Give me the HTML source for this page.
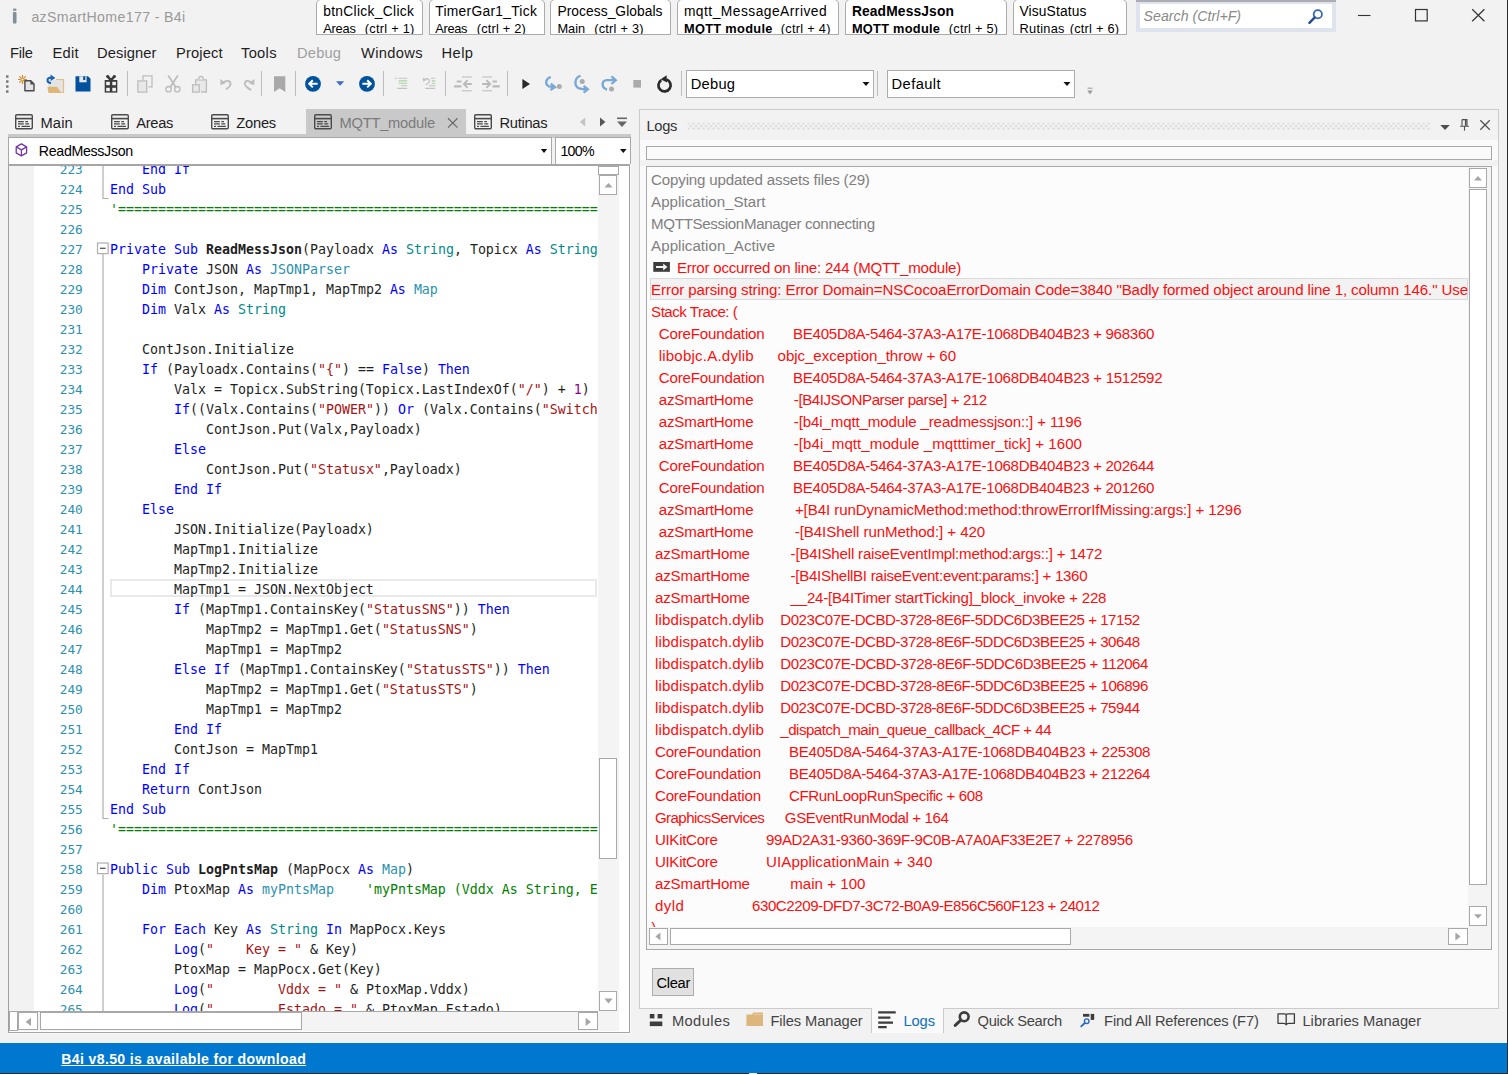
<!DOCTYPE html>
<html lang="en"><head><meta charset="utf-8"><title>azSmartHome177 - B4i</title>
<style>
html,body{margin:0;padding:0}
body{width:1508px;height:1074px;background:#f2f2f2;position:relative;overflow:hidden;font-family:"Liberation Sans", sans-serif;}
.b{position:absolute}
.t{position:absolute;white-space:pre;line-height:20px;}
#ed{position:absolute;left:34px;top:166px;width:564px;height:845px;overflow:hidden;background:#fff;font-family:"DejaVu Sans Mono", "Liberation Mono", monospace;font-size:13.29px;line-height:20px;color:#1e1e1e}
#ed .ln{position:absolute;left:0;width:48.8px;text-align:right;color:#2b91af;font-size:12.8px;white-space:pre}
#ed .cl{position:absolute;left:76px;white-space:pre}
#ed .cur{position:absolute;left:76px;width:487px;height:18px;box-sizing:border-box;border:2px solid #e9e9e9}
.k{color:#0000ff}.y{color:#2b91af}.z{color:#008b8b}.s{color:#a31515}.c{color:#008000}.n{color:#8b008b}
svg{position:absolute;overflow:visible}
</style></head>
<body>
<div class="b" style="left:316px;top:-1px;width:106.5px;height:35.5px;background:#fff;border:1px solid #ababab;box-sizing:border-box;border-radius:5px 5px 0 0;"></div>
<div class="b" style="left:428.5px;top:-1px;width:116.0px;height:35.5px;background:#fff;border:1px solid #ababab;box-sizing:border-box;border-radius:5px 5px 0 0;"></div>
<div class="b" style="left:550px;top:-1px;width:120.5px;height:35.5px;background:#fff;border:1px solid #ababab;box-sizing:border-box;border-radius:5px 5px 0 0;"></div>
<div class="b" style="left:676.5px;top:-1px;width:162.0px;height:35.5px;background:#fff;border:1px solid #ababab;box-sizing:border-box;border-radius:5px 5px 0 0;"></div>
<div class="b" style="left:844.5px;top:-1px;width:162.0px;height:35.5px;background:#fff;border:1px solid #ababab;box-sizing:border-box;border-radius:5px 5px 0 0;"></div>
<div class="b" style="left:1012.5px;top:-1px;width:114.5px;height:35.5px;background:#fff;border:1px solid #ababab;box-sizing:border-box;border-radius:5px 5px 0 0;"></div>
<div class="b" style="left:1136px;top:0px;width:200px;height:32px;background:#dfe3ee;"></div>
<div class="b" style="left:1136px;top:0px;width:200px;height:1.8px;background:#acacb2;"></div>
<div class="b" style="left:1139.8px;top:3.8px;width:192.5px;height:24.2px;background:#fff;"></div>
<div class="b" style="left:686px;top:70px;width:188px;height:27.5px;background:#fff;border:1px solid #acacac;box-sizing:border-box;"></div>
<div class="b" style="left:887px;top:70px;width:188px;height:27.5px;background:#fff;border:1px solid #acacac;box-sizing:border-box;"></div>
<div class="b" style="left:127px;top:71px;width:1px;height:25px;background:#bdbdbd;"></div>
<div class="b" style="left:261px;top:71px;width:1px;height:25px;background:#bdbdbd;"></div>
<div class="b" style="left:295px;top:71px;width:1px;height:25px;background:#bdbdbd;"></div>
<div class="b" style="left:383px;top:71px;width:1px;height:25px;background:#bdbdbd;"></div>
<div class="b" style="left:445px;top:71px;width:1px;height:25px;background:#bdbdbd;"></div>
<div class="b" style="left:507px;top:71px;width:1px;height:25px;background:#bdbdbd;"></div>
<div class="b" style="left:681px;top:71px;width:1px;height:25px;background:#bdbdbd;"></div>
<div class="b" style="left:877px;top:71px;width:1px;height:25px;background:#bdbdbd;"></div>
<div class="b" style="left:306px;top:109px;width:160px;height:25px;background:#c9c9c9;"></div>
<div class="b" style="left:8px;top:134px;width:623px;height:4px;background:#c9c9c9;"></div>
<div class="b" style="left:8px;top:137px;width:544px;height:28px;background:#fff;border:1px solid #a8a8a8;box-sizing:border-box;"></div>
<div class="b" style="left:555px;top:137px;width:76px;height:28px;background:#fff;border:1px solid #a8a8a8;box-sizing:border-box;"></div>
<div class="b" style="left:8px;top:164px;width:622px;height:869px;background:#fff;border:1px solid #a0a0a0;box-sizing:border-box;"></div>
<div class="b" style="left:8px;top:164px;width:622px;height:2px;background:#a6a6a6;"></div>
<div class="b" style="left:8px;top:1032px;width:622px;height:1px;background:#a6a6a6;"></div>
<div class="b" style="left:9px;top:166px;width:25px;height:845px;background:#f2f2f2;"></div>
<div class="b" style="left:598px;top:166px;width:21px;height:865px;background:#f4f4f4;"></div>
<div class="b" style="left:598px;top:166px;width:21px;height:9px;background:#fff;border:1px solid #a8a8a8;box-sizing:border-box;"></div>
<div class="b" style="left:599px;top:175px;width:18px;height:20px;background:#fff;border:1px solid #a8a8a8;box-sizing:border-box;"></div>
<div class="b" style="left:599px;top:758px;width:18px;height:101px;background:#fff;border:1px solid #a8a8a8;box-sizing:border-box;"></div>
<div class="b" style="left:599px;top:991.4px;width:18px;height:19.600000000000023px;background:#fff;border:1px solid #a8a8a8;box-sizing:border-box;"></div>
<div class="b" style="left:9px;top:1011px;width:589px;height:20px;background:#f4f4f4;"></div>
<div class="b" style="left:9px;top:1011px;width:589px;height:1px;background:#a8a8a8;"></div>
<div class="b" style="left:9px;top:1011px;width:9px;height:20px;background:#fff;border:1px solid #a8a8a8;box-sizing:border-box;"></div>
<div class="b" style="left:18px;top:1012px;width:20px;height:18px;background:#fff;border:1px solid #a8a8a8;box-sizing:border-box;"></div>
<div class="b" style="left:39.5px;top:1012px;width:262.5px;height:18px;background:#fff;border:1px solid #a8a8a8;box-sizing:border-box;"></div>
<div class="b" style="left:578px;top:1012px;width:20px;height:18px;background:#fff;border:1px solid #a8a8a8;box-sizing:border-box;"></div>
<div class="b" style="left:630px;top:164px;width:1.2999999999999545px;height:870px;background:#fafafa;"></div>
<div class="b" style="left:8px;top:1033px;width:623.3px;height:1px;background:#fafafa;"></div>
<div class="b" style="left:639px;top:109px;width:860px;height:900px;background:#fafafa;border:1px solid #cbcbcb;box-sizing:border-box;"></div>
<div class="b" style="left:640px;top:110px;width:858px;height:30px;background:#f2f2f2;"></div>
<div class="b" style="left:640px;top:160px;width:858px;height:6px;background:#f2f2f2;"></div>
<div class="b" style="left:646px;top:146px;width:846px;height:14px;background:#fafafa;border:1px solid #a8a8a8;box-sizing:border-box;"></div>
<div class="b" style="left:646px;top:166px;width:846px;height:784px;background:#fcfcfc;border:1px solid #a8a8a8;box-sizing:border-box;"></div>
<div class="b" style="left:650px;top:278px;width:818px;height:22px;background:#f2f2f2;border:1px solid #dadada;box-sizing:border-box;"></div>
<div class="b" style="left:1468px;top:167px;width:23px;height:760px;background:#f4f4f4;"></div>
<div class="b" style="left:1469px;top:168px;width:18px;height:20px;background:#fff;border:1px solid #a8a8a8;box-sizing:border-box;"></div>
<div class="b" style="left:1469px;top:189px;width:18px;height:696px;background:#fff;border:1px solid #a8a8a8;box-sizing:border-box;"></div>
<div class="b" style="left:1469px;top:906px;width:18px;height:20px;background:#fff;border:1px solid #a8a8a8;box-sizing:border-box;"></div>
<div class="b" style="left:652px;top:968px;width:42px;height:28px;background:#e1e1e1;border:1px solid #adadad;box-sizing:border-box;"></div>
<div class="b" style="left:870.5px;top:1008px;width:73.0px;height:24.5px;background:#fafafa;border:1px solid #cbcbcb;box-sizing:border-box;border-top:none;border-bottom:none;"></div>
<div class="b" style="left:0px;top:1043px;width:1508px;height:31px;background:#0078d0;"></div>
<div class="b" style="left:0px;top:1072.7px;width:1508px;height:1.2999999999999545px;background:#33261f;"></div>
<div class="b" style="left:749px;top:1073px;width:8px;height:1px;background:#fbe8dc;"></div>
<div class="b" style="left:1506.5px;top:0px;width:1.5px;height:1074px;background:#2b2b2b;"></div>
<div id="ed">
<div class="cur" style="top:413px"></div>
<div class="ln" style="top:-6px">223</div>
<div class="cl" style="top:-6px">    <span class="k">End</span> <span class="k">If</span></div>
<div class="ln" style="top:14px">224</div>
<div class="cl" style="top:14px"><span class="k">End</span> <span class="k">Sub</span></div>
<div class="ln" style="top:34px">225</div>
<div class="cl" style="top:34px"><span class="c">'======================================================================</span></div>
<div class="ln" style="top:54px">226</div>
<div class="ln" style="top:74px">227</div>
<div class="cl" style="top:74px"><span class="k">Private</span> <span class="k">Sub</span> <b>ReadMessJson</b>(Payloadx <span class="k">As</span> <span class="z">String</span>, Topicx <span class="k">As</span> <span class="z">String</span>) <span class="k">As</span> <span class="y">Map</span></div>
<div class="ln" style="top:94px">228</div>
<div class="cl" style="top:94px">    <span class="k">Private</span> JSON <span class="k">As</span> <span class="y">JSONParser</span></div>
<div class="ln" style="top:114px">229</div>
<div class="cl" style="top:114px">    <span class="k">Dim</span> ContJson, MapTmp1, MapTmp2 <span class="k">As</span> <span class="y">Map</span></div>
<div class="ln" style="top:134px">230</div>
<div class="cl" style="top:134px">    <span class="k">Dim</span> Valx <span class="k">As</span> <span class="z">String</span></div>
<div class="ln" style="top:154px">231</div>
<div class="ln" style="top:174px">232</div>
<div class="cl" style="top:174px">    ContJson.Initialize</div>
<div class="ln" style="top:194px">233</div>
<div class="cl" style="top:194px">    <span class="k">If</span> (Payloadx.Contains(<span class="s">"{"</span>) == <span class="k">False</span>) <span class="k">Then</span></div>
<div class="ln" style="top:214px">234</div>
<div class="cl" style="top:214px">        Valx = Topicx.SubString(Topicx.LastIndexOf(<span class="s">"/"</span>) + <span class="n">1</span>)</div>
<div class="ln" style="top:234px">235</div>
<div class="cl" style="top:234px">        <span class="k">If</span>((Valx.Contains(<span class="s">"POWER"</span>)) <span class="k">Or</span> (Valx.Contains(<span class="s">"Switch1"</span>))) <span class="k">Then</span></div>
<div class="ln" style="top:254px">236</div>
<div class="cl" style="top:254px">            ContJson.Put(Valx,Payloadx)</div>
<div class="ln" style="top:274px">237</div>
<div class="cl" style="top:274px">        <span class="k">Else</span></div>
<div class="ln" style="top:294px">238</div>
<div class="cl" style="top:294px">            ContJson.Put(<span class="s">"Statusx"</span>,Payloadx)</div>
<div class="ln" style="top:314px">239</div>
<div class="cl" style="top:314px">        <span class="k">End</span> <span class="k">If</span></div>
<div class="ln" style="top:334px">240</div>
<div class="cl" style="top:334px">    <span class="k">Else</span></div>
<div class="ln" style="top:354px">241</div>
<div class="cl" style="top:354px">        JSON.Initialize(Payloadx)</div>
<div class="ln" style="top:374px">242</div>
<div class="cl" style="top:374px">        MapTmp1.Initialize</div>
<div class="ln" style="top:394px">243</div>
<div class="cl" style="top:394px">        MapTmp2.Initialize</div>
<div class="ln" style="top:414px">244</div>
<div class="cl" style="top:414px">        MapTmp1 = JSON.NextObject</div>
<div class="ln" style="top:434px">245</div>
<div class="cl" style="top:434px">        <span class="k">If</span> (MapTmp1.ContainsKey(<span class="s">"StatusSNS"</span>)) <span class="k">Then</span></div>
<div class="ln" style="top:454px">246</div>
<div class="cl" style="top:454px">            MapTmp2 = MapTmp1.Get(<span class="s">"StatusSNS"</span>)</div>
<div class="ln" style="top:474px">247</div>
<div class="cl" style="top:474px">            MapTmp1 = MapTmp2</div>
<div class="ln" style="top:494px">248</div>
<div class="cl" style="top:494px">        <span class="k">Else</span> <span class="k">If</span> (MapTmp1.ContainsKey(<span class="s">"StatusSTS"</span>)) <span class="k">Then</span></div>
<div class="ln" style="top:514px">249</div>
<div class="cl" style="top:514px">            MapTmp2 = MapTmp1.Get(<span class="s">"StatusSTS"</span>)</div>
<div class="ln" style="top:534px">250</div>
<div class="cl" style="top:534px">            MapTmp1 = MapTmp2</div>
<div class="ln" style="top:554px">251</div>
<div class="cl" style="top:554px">        <span class="k">End</span> <span class="k">If</span></div>
<div class="ln" style="top:574px">252</div>
<div class="cl" style="top:574px">        ContJson = MapTmp1</div>
<div class="ln" style="top:594px">253</div>
<div class="cl" style="top:594px">    <span class="k">End</span> <span class="k">If</span></div>
<div class="ln" style="top:614px">254</div>
<div class="cl" style="top:614px">    <span class="k">Return</span> ContJson</div>
<div class="ln" style="top:634px">255</div>
<div class="cl" style="top:634px"><span class="k">End</span> <span class="k">Sub</span></div>
<div class="ln" style="top:654px">256</div>
<div class="cl" style="top:654px"><span class="c">'======================================================================</span></div>
<div class="ln" style="top:674px">257</div>
<div class="ln" style="top:694px">258</div>
<div class="cl" style="top:694px"><span class="k">Public</span> <span class="k">Sub</span> <b>LogPntsMap</b> (MapPocx <span class="k">As</span> <span class="y">Map</span>)</div>
<div class="ln" style="top:714px">259</div>
<div class="cl" style="top:714px">    <span class="k">Dim</span> PtoxMap <span class="k">As</span> <span class="y">myPntsMap</span>    <span class="c">'myPntsMap (Vddx As String, Estado As String)</span></div>
<div class="ln" style="top:734px">260</div>
<div class="ln" style="top:754px">261</div>
<div class="cl" style="top:754px">    <span class="k">For</span> <span class="k">Each</span> Key <span class="k">As</span> <span class="z">String</span> <span class="k">In</span> MapPocx.Keys</div>
<div class="ln" style="top:774px">262</div>
<div class="cl" style="top:774px">        <span class="k">Log</span>(<span class="s">"    Key = "</span> &amp; Key)</div>
<div class="ln" style="top:794px">263</div>
<div class="cl" style="top:794px">        PtoxMap = MapPocx.Get(Key)</div>
<div class="ln" style="top:814px">264</div>
<div class="cl" style="top:814px">        <span class="k">Log</span>(<span class="s">"        Vddx = "</span> &amp; PtoxMap.Vddx)</div>
<div class="ln" style="top:834px">265</div>
<div class="cl" style="top:834px">        <span class="k">Log</span>(<span class="s">"        Estado = "</span> &amp; PtoxMap.Estado)</div>
</div>
<span class="t" style="left:31.4px;top:7px;font-size:14.1px;color:#999999;letter-spacing:0.385px;">azSmartHome177 - B4i</span>
<span class="t" style="left:10.0px;top:43px;font-size:14.7px;color:#1e1e1e;letter-spacing:-0.224px;">File</span>
<span class="t" style="left:52.4px;top:43px;font-size:14.7px;color:#1e1e1e;letter-spacing:0.263px;">Edit</span>
<span class="t" style="left:97.0px;top:43px;font-size:14.7px;color:#1e1e1e;letter-spacing:0.103px;">Designer</span>
<span class="t" style="left:176.0px;top:43px;font-size:14.7px;color:#1e1e1e;letter-spacing:0.130px;">Project</span>
<span class="t" style="left:241.0px;top:43px;font-size:14.7px;color:#1e1e1e;letter-spacing:0.301px;">Tools</span>
<span class="t" style="left:361.0px;top:43px;font-size:14.7px;color:#1e1e1e;letter-spacing:0.318px;">Windows</span>
<span class="t" style="left:441.6px;top:43px;font-size:14.7px;color:#1e1e1e;letter-spacing:0.394px;">Help</span>
<span class="t" style="left:297.0px;top:43px;font-size:14.7px;color:#a0a0a0;letter-spacing:0.180px;">Debug</span>
<span class="t" style="left:323.2px;top:2px;font-size:13.8px;color:#000;letter-spacing:0.312px;">btnClick_Click</span>
<span class="t" style="left:323.2px;top:19px;font-size:12.8px;color:#000;letter-spacing:-0.184px;">Areas</span>
<span class="t" style="left:364.7px;top:19px;font-size:12.8px;color:#000;letter-spacing:0.267px;">(ctrl + 1)</span>
<span class="t" style="left:435.3px;top:2px;font-size:13.8px;color:#000;letter-spacing:0.279px;">TimerGar1_Tick</span>
<span class="t" style="left:435.3px;top:19px;font-size:12.8px;color:#000;letter-spacing:-0.309px;">Areas</span>
<span class="t" style="left:476.8px;top:19px;font-size:12.8px;color:#000;letter-spacing:0.200px;">(ctrl + 2)</span>
<span class="t" style="left:557.4px;top:2px;font-size:13.8px;color:#000;letter-spacing:0.057px;">Process_Globals</span>
<span class="t" style="left:557.4px;top:19px;font-size:12.8px;color:#000;letter-spacing:-0.017px;">Main</span>
<span class="t" style="left:594.2px;top:19px;font-size:12.8px;color:#000;letter-spacing:0.234px;">(ctrl + 3)</span>
<span class="t" style="left:683.9px;top:2px;font-size:13.8px;color:#000;letter-spacing:0.478px;">mqtt_MessageArrived</span>
<span class="t" style="left:683.9px;top:19px;font-size:12.8px;color:#000;font-weight:bold;letter-spacing:0.329px;">MQTT module</span>
<span class="t" style="left:780.8px;top:19px;font-size:12.8px;color:#000;letter-spacing:0.267px;">(ctrl + 4)</span>
<span class="t" style="left:851.9px;top:2px;font-size:13.8px;color:#000;font-weight:bold;letter-spacing:0.141px;">ReadMessJson</span>
<span class="t" style="left:851.9px;top:19px;font-size:12.8px;color:#000;font-weight:bold;letter-spacing:0.279px;">MQTT module</span>
<span class="t" style="left:948.8px;top:19px;font-size:12.8px;color:#000;letter-spacing:0.211px;">(ctrl + 5)</span>
<span class="t" style="left:1019.5px;top:2px;font-size:13.8px;color:#000;letter-spacing:0.131px;">VisuStatus</span>
<span class="t" style="left:1019.5px;top:19px;font-size:12.8px;color:#000;letter-spacing:0.268px;">Rutinas</span>
<span class="t" style="left:1069.7px;top:19px;font-size:12.8px;color:#000;letter-spacing:0.223px;">(ctrl + 6)</span>
<span class="t" style="left:1143.6px;top:6px;font-size:14.2px;color:#8a8a8a;font-style:italic;letter-spacing:0.010px;">Search (Ctrl+F)</span>
<span class="t" style="left:690.7px;top:74px;font-size:14.7px;color:#000;letter-spacing:0.255px;">Debug</span>
<span class="t" style="left:891.6px;top:74px;font-size:14.7px;color:#000;letter-spacing:0.392px;">Default</span>
<span class="t" style="left:40.5px;top:113px;font-size:14.7px;color:#1e1e1e;letter-spacing:0.119px;">Main</span>
<span class="t" style="left:136.3px;top:113px;font-size:14.7px;color:#1e1e1e;letter-spacing:-0.319px;">Areas</span>
<span class="t" style="left:236.3px;top:113px;font-size:14.7px;color:#1e1e1e;letter-spacing:-0.232px;">Zones</span>
<span class="t" style="left:339.5px;top:113px;font-size:14.7px;color:#7a7a7a;letter-spacing:-0.235px;">MQTT_module</span>
<span class="t" style="left:499.5px;top:113px;font-size:14.7px;color:#1e1e1e;letter-spacing:-0.302px;">Rutinas</span>
<span class="t" style="left:38.8px;top:141px;font-size:14.2px;color:#000;letter-spacing:-0.313px;">ReadMessJson</span>
<span class="t" style="left:560.4px;top:141px;font-size:14.2px;color:#000;letter-spacing:-0.666px;">100%</span>
<span class="t" style="left:646.5px;top:116px;font-size:14.7px;color:#333;letter-spacing:-0.320px;">Logs</span>
<span class="t" style="left:656.5px;top:973px;font-size:14.7px;color:#000;letter-spacing:-0.327px;">Clear</span>
<span class="t" style="left:671.9px;top:1011px;font-size:14.7px;color:#444;letter-spacing:0.397px;">Modules</span>
<span class="t" style="left:770.4px;top:1011px;font-size:14.7px;color:#444;letter-spacing:-0.064px;">Files Manager</span>
<span class="t" style="left:903.4px;top:1011px;font-size:14.7px;color:#0e70c0;letter-spacing:-0.053px;">Logs</span>
<span class="t" style="left:977.6px;top:1011px;font-size:14.7px;color:#444;letter-spacing:-0.325px;">Quick Search</span>
<span class="t" style="left:1104.1px;top:1011px;font-size:14.7px;color:#444;letter-spacing:-0.159px;">Find All References (F7)</span>
<span class="t" style="left:1302.4px;top:1011px;font-size:14.7px;color:#444;letter-spacing:0.027px;">Libraries Manager</span>
<span class="t" style="left:61.3px;top:1049px;font-size:14.1px;color:#fff;font-weight:bold;text-decoration:underline;letter-spacing:0.349px;">B4i v8.50 is available for download</span>
<span class="t" style="left:651.1px;top:170px;font-size:15.1px;color:#808080;letter-spacing:-0.163px;">Copying updated assets files (29)</span>
<span class="t" style="left:651.1px;top:192px;font-size:15.1px;color:#808080;letter-spacing:0.011px;">Application_Start</span>
<span class="t" style="left:651.1px;top:214px;font-size:15.1px;color:#808080;letter-spacing:-0.330px;">MQTTSessionManager connecting</span>
<span class="t" style="left:651.1px;top:236px;font-size:15.1px;color:#808080;letter-spacing:0.039px;">Application_Active</span>
<span class="t" style="left:676.9px;top:258px;font-size:15.1px;color:#fa0f0f;letter-spacing:-0.230px;">Error occurred on line: 244 (MQTT_module)</span>
<span class="t" style="left:651.1px;top:280px;font-size:15.1px;color:#fa0f0f;letter-spacing:-0.109px;">Error parsing string: Error Domain=NSCocoaErrorDomain Code=3840 "Badly formed object around line 1, column 146." Use</span>
<span class="t" style="left:651.1px;top:302px;font-size:15.1px;color:#fa0f0f;letter-spacing:-0.493px;">Stack Trace: (</span>
<span class="t" style="left:658.7px;top:324px;font-size:15.1px;color:#fa0f0f;letter-spacing:-0.173px;">CoreFoundation</span>
<span class="t" style="left:793.1px;top:324px;font-size:15.1px;color:#fa0f0f;letter-spacing:-0.305px;">BE405D8A-5464-37A3-A17E-1068DB404B23 + 968360</span>
<span class="t" style="left:658.7px;top:346px;font-size:15.1px;color:#fa0f0f;letter-spacing:0.193px;">libobjc.A.dylib</span>
<span class="t" style="left:777.6px;top:346px;font-size:15.1px;color:#fa0f0f;letter-spacing:-0.063px;">objc_exception_throw + 60</span>
<span class="t" style="left:658.7px;top:368px;font-size:15.1px;color:#fa0f0f;letter-spacing:-0.173px;">CoreFoundation</span>
<span class="t" style="left:793.1px;top:368px;font-size:15.1px;color:#fa0f0f;letter-spacing:-0.302px;">BE405D8A-5464-37A3-A17E-1068DB404B23 + 1512592</span>
<span class="t" style="left:658.7px;top:390px;font-size:15.1px;color:#fa0f0f;letter-spacing:-0.147px;">azSmartHome</span>
<span class="t" style="left:793.8px;top:390px;font-size:15.1px;color:#fa0f0f;letter-spacing:-0.434px;">-[B4IJSONParser parse] + 212</span>
<span class="t" style="left:658.7px;top:412px;font-size:15.1px;color:#fa0f0f;letter-spacing:-0.147px;">azSmartHome</span>
<span class="t" style="left:793.8px;top:412px;font-size:15.1px;color:#fa0f0f;letter-spacing:-0.140px;">-[b4i_mqtt_module _readmessjson::] + 1196</span>
<span class="t" style="left:658.7px;top:434px;font-size:15.1px;color:#fa0f0f;letter-spacing:-0.147px;">azSmartHome</span>
<span class="t" style="left:793.8px;top:434px;font-size:15.1px;color:#fa0f0f;letter-spacing:0.042px;">-[b4i_mqtt_module _mqtttimer_tick] + 1600</span>
<span class="t" style="left:658.7px;top:456px;font-size:15.1px;color:#fa0f0f;letter-spacing:-0.173px;">CoreFoundation</span>
<span class="t" style="left:793.1px;top:456px;font-size:15.1px;color:#fa0f0f;letter-spacing:-0.305px;">BE405D8A-5464-37A3-A17E-1068DB404B23 + 202644</span>
<span class="t" style="left:658.7px;top:478px;font-size:15.1px;color:#fa0f0f;letter-spacing:-0.173px;">CoreFoundation</span>
<span class="t" style="left:793.1px;top:478px;font-size:15.1px;color:#fa0f0f;letter-spacing:-0.305px;">BE405D8A-5464-37A3-A17E-1068DB404B23 + 201260</span>
<span class="t" style="left:658.7px;top:500px;font-size:15.1px;color:#fa0f0f;letter-spacing:-0.147px;">azSmartHome</span>
<span class="t" style="left:794.9px;top:500px;font-size:15.1px;color:#fa0f0f;letter-spacing:-0.089px;">+[B4I runDynamicMethod:method:throwErrorIfMissing:args:] + 1296</span>
<span class="t" style="left:658.7px;top:522px;font-size:15.1px;color:#fa0f0f;letter-spacing:-0.147px;">azSmartHome</span>
<span class="t" style="left:794.7px;top:522px;font-size:15.1px;color:#fa0f0f;letter-spacing:-0.077px;">-[B4IShell runMethod:] + 420</span>
<span class="t" style="left:654.9px;top:544px;font-size:15.1px;color:#fa0f0f;letter-spacing:-0.137px;">azSmartHome</span>
<span class="t" style="left:790.6px;top:544px;font-size:15.1px;color:#fa0f0f;letter-spacing:-0.198px;">-[B4IShell raiseEventImpl:method:args::] + 1472</span>
<span class="t" style="left:654.9px;top:566px;font-size:15.1px;color:#fa0f0f;letter-spacing:-0.137px;">azSmartHome</span>
<span class="t" style="left:790.6px;top:566px;font-size:15.1px;color:#fa0f0f;letter-spacing:-0.296px;">-[B4IShellBI raiseEvent:event:params:] + 1360</span>
<span class="t" style="left:654.9px;top:588px;font-size:15.1px;color:#fa0f0f;letter-spacing:-0.137px;">azSmartHome</span>
<span class="t" style="left:790.6px;top:588px;font-size:15.1px;color:#fa0f0f;letter-spacing:-0.230px;">__24-[B4ITimer startTicking]_block_invoke + 228</span>
<span class="t" style="left:654.9px;top:610px;font-size:15.1px;color:#fa0f0f;letter-spacing:0.159px;">libdispatch.dylib</span>
<span class="t" style="left:780.3px;top:610px;font-size:15.1px;color:#fa0f0f;letter-spacing:-0.498px;">D023C07E-DCBD-3728-8E6F-5DDC6D3BEE25 + 17152</span>
<span class="t" style="left:654.9px;top:632px;font-size:15.1px;color:#fa0f0f;letter-spacing:0.159px;">libdispatch.dylib</span>
<span class="t" style="left:780.3px;top:632px;font-size:15.1px;color:#fa0f0f;letter-spacing:-0.498px;">D023C07E-DCBD-3728-8E6F-5DDC6D3BEE25 + 30648</span>
<span class="t" style="left:654.9px;top:654px;font-size:15.1px;color:#fa0f0f;letter-spacing:0.159px;">libdispatch.dylib</span>
<span class="t" style="left:780.3px;top:654px;font-size:15.1px;color:#fa0f0f;letter-spacing:-0.466px;">D023C07E-DCBD-3728-8E6F-5DDC6D3BEE25 + 112064</span>
<span class="t" style="left:654.9px;top:676px;font-size:15.1px;color:#fa0f0f;letter-spacing:0.159px;">libdispatch.dylib</span>
<span class="t" style="left:780.3px;top:676px;font-size:15.1px;color:#fa0f0f;letter-spacing:-0.491px;">D023C07E-DCBD-3728-8E6F-5DDC6D3BEE25 + 106896</span>
<span class="t" style="left:654.9px;top:698px;font-size:15.1px;color:#fa0f0f;letter-spacing:0.159px;">libdispatch.dylib</span>
<span class="t" style="left:780.3px;top:698px;font-size:15.1px;color:#fa0f0f;letter-spacing:-0.498px;">D023C07E-DCBD-3728-8E6F-5DDC6D3BEE25 + 75944</span>
<span class="t" style="left:654.9px;top:720px;font-size:15.1px;color:#fa0f0f;letter-spacing:0.159px;">libdispatch.dylib</span>
<span class="t" style="left:780.3px;top:720px;font-size:15.1px;color:#fa0f0f;letter-spacing:-0.503px;">_dispatch_main_queue_callback_4CF + 44</span>
<span class="t" style="left:654.9px;top:742px;font-size:15.1px;color:#fa0f0f;letter-spacing:-0.158px;">CoreFoundation</span>
<span class="t" style="left:789.0px;top:742px;font-size:15.1px;color:#fa0f0f;letter-spacing:-0.300px;">BE405D8A-5464-37A3-A17E-1068DB404B23 + 225308</span>
<span class="t" style="left:654.9px;top:764px;font-size:15.1px;color:#fa0f0f;letter-spacing:-0.158px;">CoreFoundation</span>
<span class="t" style="left:789.0px;top:764px;font-size:15.1px;color:#fa0f0f;letter-spacing:-0.300px;">BE405D8A-5464-37A3-A17E-1068DB404B23 + 212264</span>
<span class="t" style="left:654.9px;top:786px;font-size:15.1px;color:#fa0f0f;letter-spacing:-0.158px;">CoreFoundation</span>
<span class="t" style="left:789.0px;top:786px;font-size:15.1px;color:#fa0f0f;letter-spacing:-0.409px;">CFRunLoopRunSpecific + 608</span>
<span class="t" style="left:654.9px;top:808px;font-size:15.1px;color:#fa0f0f;letter-spacing:-0.559px;">GraphicsServices</span>
<span class="t" style="left:784.8px;top:808px;font-size:15.1px;color:#fa0f0f;letter-spacing:-0.370px;">GSEventRunModal + 164</span>
<span class="t" style="left:654.9px;top:830px;font-size:15.1px;color:#fa0f0f;letter-spacing:-0.305px;">UIKitCore</span>
<span class="t" style="left:765.9px;top:830px;font-size:15.1px;color:#fa0f0f;letter-spacing:-0.388px;">99AD2A31-9360-369F-9C0B-A7A0AF33E2E7 + 2278956</span>
<span class="t" style="left:654.9px;top:852px;font-size:15.1px;color:#fa0f0f;letter-spacing:-0.305px;">UIKitCore</span>
<span class="t" style="left:765.9px;top:852px;font-size:15.1px;color:#fa0f0f;letter-spacing:0.116px;">UIApplicationMain + 340</span>
<span class="t" style="left:654.9px;top:874px;font-size:15.1px;color:#fa0f0f;letter-spacing:-0.137px;">azSmartHome</span>
<span class="t" style="left:790.2px;top:874px;font-size:15.1px;color:#fa0f0f;letter-spacing:0.021px;">main + 100</span>
<span class="t" style="left:654.9px;top:896px;font-size:15.1px;color:#fa0f0f;letter-spacing:0.399px;">dyld</span>
<span class="t" style="left:752.0px;top:896px;font-size:15.1px;color:#fa0f0f;letter-spacing:-0.447px;">630C2209-DFD7-3C72-B0A9-E856C560F123 + 24012</span>
<span class="t" style="left:651.3px;top:918px;font-size:15.1px;color:#fa0f0f;letter-spacing:-1.131px;">)</span>
<div class="b" style="left:647px;top:927px;width:844px;height:22px;background:#f4f4f4;"></div>
<div class="b" style="left:648.5px;top:927.5px;width:19.0px;height:17.5px;background:#fff;border:1px solid #a8a8a8;box-sizing:border-box;"></div>
<div class="b" style="left:669.5px;top:927.5px;width:401.0px;height:17.5px;background:#fff;border:1px solid #a8a8a8;box-sizing:border-box;"></div>
<div class="b" style="left:1448px;top:927.5px;width:20px;height:17.5px;background:#fff;border:1px solid #a8a8a8;box-sizing:border-box;"></div>
<div class="b" style="left:300px;top:34.5px;width:835px;height:5.5px;background:#f2f2f2;"></div>
<div class="b" style="left:316px;top:33.5px;width:106.5px;height:1.0px;background:#ababab;"></div>
<div class="b" style="left:428.5px;top:33.5px;width:116.0px;height:1.0px;background:#ababab;"></div>
<div class="b" style="left:550px;top:33.5px;width:120.5px;height:1.0px;background:#ababab;"></div>
<div class="b" style="left:676.5px;top:33.5px;width:162.0px;height:1.0px;background:#ababab;"></div>
<div class="b" style="left:844.5px;top:33.5px;width:162.0px;height:1.0px;background:#ababab;"></div>
<div class="b" style="left:1012.5px;top:33.5px;width:114.5px;height:1.0px;background:#ababab;"></div>
<svg width="1508" height="1074" style="left:0;top:0">
<rect x="12.9" y="8.5" width="3.6" height="2.4" rx="0.8" fill="#8a9aa2"/><rect x="12.9" y="12" width="3.6" height="11.4" rx="1" fill="#7f9098"/>
<path d="M1358 15.5H1370.5" stroke="#333" stroke-width="1.1"/>
<rect x="1415.5" y="9.5" width="11.7" height="11.4" fill="none" stroke="#333" stroke-width="1.2"/>
<path d="M1472.2 9.3L1484.4 21.3M1484.4 9.3L1472.2 21.3" stroke="#333" stroke-width="1.2"/>
<circle cx="1317.8" cy="14.3" r="4.1" fill="none" stroke="#3565b4" stroke-width="1.8"/><path d="M1314.8 17.4L1309.4 22.8" stroke="#24498f" stroke-width="2.4" stroke-linecap="round"/>
<rect x="6" y="75.3" width="2.5" height="2.5" fill="#7a7a7a"/>
<rect x="6" y="80.3" width="2.5" height="2.5" fill="#7a7a7a"/>
<rect x="6" y="85.3" width="2.5" height="2.5" fill="#7a7a7a"/>
<rect x="6" y="90.3" width="2.5" height="2.5" fill="#7a7a7a"/>
<g stroke="#d08a2a" stroke-width="1.2"><path d="M22.5 75V84M18 79.5H27M19.3 76.3L25.7 82.7M25.7 76.3L19.3 82.7"/></g><circle cx="22.5" cy="79.5" r="1" fill="#fff"/>
<path d="M24.9 80.8H30.8L34 84V90.7H24.9Z" fill="#e4e4e4" stroke="#4a4a4a" stroke-width="1.4" stroke-linejoin="round"/><path d="M30.4 80.4L34.4 84.4L30.4 84.4Z" fill="#4a4a4a"/>
<path d="M56 79.5H63.5V92.5H49" fill="#e4e4e4" stroke="#e2bd86" stroke-width="1.2"/><path d="M48 80H56V87H48Z" fill="#e4e4e4"/>
<path d="M47.3 86.8H57L61.5 93H48.5Z" fill="#deb678"/>
<path d="M51 83C46.5 83 46 77.5 51.5 77.5" fill="none" stroke="#1763b5" stroke-width="2"/><path d="M50.6 74.6L55.4 78L50.6 81Z" fill="#1763b5"/>
<path d="M75.5 76.3H88L90.5 78.8V91.4H75.5Z" fill="#00529e"/><rect x="79.3" y="76.3" width="7.3" height="6" fill="#e6e6e6"/><rect x="83.2" y="76.3" width="2.1" height="3.7" fill="#00529e"/>
<rect x="104.7" y="80" width="12.6" height="12.6" fill="#3c3c3c"/>
<rect x="106.2" y="81.8" width="3.6" height="3.4" fill="#f4f4f4"/>
<rect x="106.2" y="87.8" width="3.6" height="3.4" fill="#f4f4f4"/>
<rect x="112.3" y="81.8" width="3.6" height="3.4" fill="#f4f4f4"/>
<rect x="112.3" y="87.8" width="3.6" height="3.4" fill="#f4f4f4"/>
<path d="M111 80.4L107.6 76.4M111 80.4L114.4 76.4" stroke="#3c3c3c" stroke-width="2.4" stroke-linecap="round"/><circle cx="107.7" cy="76.6" r="1.5" fill="#3c3c3c"/><circle cx="114.3" cy="76.6" r="1.5" fill="#3c3c3c"/>
<path d="M143 80V75.9H152V86.9H148.5" fill="none" stroke="#bdbdbd" stroke-width="1.3"/><rect x="137.9" y="80.9" width="8.8" height="11.2" fill="#e8e8e8" stroke="#bdbdbd" stroke-width="1.3"/>
<path d="M168.2 75.5L176 87.5M177.8 75.5L170 87.5" stroke="#bdbdbd" stroke-width="1.7"/><circle cx="168.6" cy="89.2" r="2.7" fill="none" stroke="#bdbdbd" stroke-width="1.4"/><circle cx="177.3" cy="89.2" r="2.7" fill="none" stroke="#bdbdbd" stroke-width="1.4"/>
<path d="M195.6 84V79.8H206.4V92H201" fill="#e8e8e8" stroke="#bdbdbd" stroke-width="1.3"/><path d="M198.6 79.6A2.4 3.2 0 0 1 203.4 79.6" fill="#f0f0f0" stroke="#bdbdbd" stroke-width="1.3"/><rect x="192.6" y="84.8" width="6.6" height="7.3" fill="#e8e8e8" stroke="#bdbdbd" stroke-width="1.3"/>
<path d="M222.5 83.5C226 79 231 81 230.5 84.5C230.3 86.5 228 88 226 89.3" fill="none" stroke="#bdbdbd" stroke-width="1.9"/><path d="M220.2 79L220.6 85.3L226 83Z" fill="#bdbdbd"/>
<path d="M252 83.5C248.5 79 244 81 245 84.5C245.5 86.5 248.5 88.3 251 90.2" fill="none" stroke="#bdbdbd" stroke-width="1.9"/><path d="M254.6 79L254.2 85.3L248.6 83Z" fill="#bdbdbd"/>
<path d="M274 76.3H285.3V92L279.6 88.2L274 92Z" fill="#a9a9a9"/>
<circle cx="313" cy="83.8" r="7.9" fill="#00529e"/><path d="M317.6 83.8H309.5M312.8 80.2L309.2 83.8L312.8 87.4" fill="none" stroke="#fff" stroke-width="2"/>
<circle cx="367" cy="83.8" r="7.9" fill="#00529e"/><path d="M362.4 83.8H370.5M367.2 80.2L370.8 83.8L367.2 87.4" fill="none" stroke="#fff" stroke-width="2"/>
<path d="M336 81.2H344.2L340.1 85.8Z" fill="#3d6cc0"/>
<g stroke-width="1.1"><path d="M394.7 78.3H397M398.6 78.3H407.2M401 85.8H407.2M397.2 88.4H407.2" stroke="#c2c2c2"/><path d="M398.6 80.9H407.2M398.6 83.3H407.2" stroke="#a9d3a3"/></g>
<g stroke-width="1.1"><path d="M431 78.3H435.2M429 85.8H435.2M425.3 88.4H435.2" stroke="#c2c2c2"/><path d="M431.7 80.9H435.2M431.7 83.3H435.2" stroke="#a9d3a3"/></g>
<path d="M424.5 79.5C428 77.5 430.3 80 429 82.3C428.3 83.5 427 84.2 426 84.8" fill="none" stroke="#c2c2c2" stroke-width="1.3"/><path d="M422.8 77.6L423 81.8L426.6 80Z" fill="#c2c2c2"/>
<g stroke="#b9b9b9"><path d="M462 77H471.8M462 90.8H471.8" stroke-width="1"/><path d="M456.7 81.5H461.5M454.1 86.4H461.5" stroke-width="2.2"/><path d="M464 84H471.8" stroke-width="2"/><path d="M467.6 80.2L463.8 84L467.6 87.8" fill="none" stroke-width="1.8"/></g>
<g stroke="#b9b9b9"><path d="M482.2 77H492M482.2 90.8H492" stroke-width="1"/><path d="M492.5 81.5H497M492.5 86.4H499.8" stroke-width="2.2"/><path d="M482.2 84H490" stroke-width="2"/><path d="M486.4 80.2L490.2 84L486.4 87.8" fill="none" stroke-width="1.8"/></g>
<path d="M522.4 79L530 84L522.4 89Z" fill="#2a2a2a"/>
<path d="M550.8 77C545.5 78.5 544.5 84.5 549 86.5L553.5 87" fill="none" stroke="#78a8d6" stroke-width="2.3"/><path d="M550.8 83.6L555 87.2L550.4 90" fill="none" stroke="#78a8d6" stroke-width="2.3"/><circle cx="559.3" cy="86.5" r="2.5" fill="#ababab"/>
<path d="M580.6 75.8C575 77 574.2 84 577 87C578.5 88.8 582 89.2 586.5 89.2" fill="none" stroke="#78a8d6" stroke-width="2.3"/><path d="M583.6 85.8L587.8 89.3L583.6 92.6" fill="none" stroke="#78a8d6" stroke-width="2.3"/><circle cx="582.2" cy="81.4" r="2.5" fill="#ababab"/>
<path d="M607 89.6C601.5 88 601 81 606.5 80.2L614.5 80.2" fill="none" stroke="#78a8d6" stroke-width="2.3"/><path d="M611.4 76.4L615.8 80.2L611.4 84" fill="none" stroke="#78a8d6" stroke-width="2.3"/><circle cx="611.5" cy="88.9" r="2.5" fill="#ababab"/>
<rect x="633.3" y="80" width="7.7" height="7.6" fill="#ababab"/>
<path d="M661.3 80.1A6.1 6.1 0 1 0 666.5 79.5" fill="none" stroke="#2a2a2a" stroke-width="2.7"/><path d="M666.6 75.2L660.6 79.2L667 82.6Z" fill="#2a2a2a"/>
<path d="M862.5 82H869.5L866.0 86Z" fill="#111"/>
<path d="M1063.5 82H1070.5L1067.0 86Z" fill="#111"/>
<path d="M1087.5 88.2H1092.5" stroke="#9a9a9a" stroke-width="1"/><path d="M1087.3 90.5H1092.7L1090 94.5Z" fill="#9a9a9a"/>
<g transform="translate(15,114)" fill="none" stroke="#4a4a4a">
<rect x="0.7" y="0.7" width="16.6" height="14.1" rx="1.2" stroke-width="1.4"/>
<path d="M0.7 4.6H17.3" stroke-width="1.6"/>
<path d="M3 7.6H8.8M10.3 7.6H13M3 9.9H8.8M10.3 9.9H14.2M3 12.4H5M6.4 12.4H14.9" stroke-width="1.2"/>
</g>
<g transform="translate(111,114)" fill="none" stroke="#4a4a4a">
<rect x="0.7" y="0.7" width="16.6" height="14.1" rx="1.2" stroke-width="1.4"/>
<path d="M0.7 4.6H17.3" stroke-width="1.6"/>
<path d="M3 7.6H8.8M10.3 7.6H13M3 9.9H8.8M10.3 9.9H14.2M3 12.4H5M6.4 12.4H14.9" stroke-width="1.2"/>
</g>
<g transform="translate(211,114)" fill="none" stroke="#4a4a4a">
<rect x="0.7" y="0.7" width="16.6" height="14.1" rx="1.2" stroke-width="1.4"/>
<path d="M0.7 4.6H17.3" stroke-width="1.6"/>
<path d="M3 7.6H8.8M10.3 7.6H13M3 9.9H8.8M10.3 9.9H14.2M3 12.4H5M6.4 12.4H14.9" stroke-width="1.2"/>
</g>
<g transform="translate(314,114)" fill="none" stroke="#4a4a4a">
<rect x="0.7" y="0.7" width="16.6" height="14.1" rx="1.2" stroke-width="1.4"/>
<path d="M0.7 4.6H17.3" stroke-width="1.6"/>
<path d="M3 7.6H8.8M10.3 7.6H13M3 9.9H8.8M10.3 9.9H14.2M3 12.4H5M6.4 12.4H14.9" stroke-width="1.2"/>
</g>
<g transform="translate(474,114)" fill="none" stroke="#4a4a4a">
<rect x="0.7" y="0.7" width="16.6" height="14.1" rx="1.2" stroke-width="1.4"/>
<path d="M0.7 4.6H17.3" stroke-width="1.6"/>
<path d="M3 7.6H8.8M10.3 7.6H13M3 9.9H8.8M10.3 9.9H14.2M3 12.4H5M6.4 12.4H14.9" stroke-width="1.2"/>
</g>
<path d="M448 118.2L457.5 127.6M457.5 118.2L448 127.6" stroke="#6a6a6a" stroke-width="1.2"/>
<path d="M585.2 117.5V126.5L579.8 122Z" fill="#c4c4c4"/><path d="M600 117.5V126.5L605.4 122Z" fill="#555"/>
<path d="M617 118.3H627" stroke="#666" stroke-width="1.6"/><path d="M617 121.5H627L622 127Z" fill="#666"/>
<path d="M540.8 149H547.2L544 153Z" fill="#111"/><path d="M620 149H626.6L623.3 153Z" fill="#111"/>
<g fill="none" stroke="#7436a8" stroke-width="1.3" stroke-linejoin="round"><path d="M21.4 143.9L26.6 146.9V152.9L21.4 155.9L16.2 152.9V146.9Z"/><path d="M16.2 146.9L21.4 149.9L26.6 146.9M21.4 149.9V155.9"/></g>
<path d="M604.4 187.6H612.6L608.5 183Z" fill="#a6a6a6"/><path d="M604.4 998.6H612.6L608.5 1003.4Z" fill="#a6a6a6"/>
<path d="M31 1017.8V1026L25.6 1021.9Z" fill="#a6a6a6"/><path d="M585.6 1017.8V1026L591 1021.9Z" fill="#a6a6a6"/>
<path d="M1440.3 125H1449.8L1445 130Z" fill="#4e4e4e"/>
<path d="M1462 119.6H1467V125.8M1462 119.6V125.8" fill="none" stroke="#505050" stroke-width="1.1"/><path d="M1465.7 119.6V125.8" stroke="#505050" stroke-width="1.6"/><path d="M1460 126.2H1469M1464.5 126.2V130.8" stroke="#505050" stroke-width="1.1"/>
<path d="M1480.3 120.2L1489.8 129.8M1489.8 120.2L1480.3 129.8" stroke="#505050" stroke-width="1.25"/>
<path d="M1474 180.4H1482L1478 176Z" fill="#a6a6a6"/><path d="M1474 914.2H1482L1478 918.6Z" fill="#a6a6a6"/>
<path d="M660.4 932.4V940.4L655.4 936.4Z" fill="#a6a6a6"/><path d="M1455.4 932.4V940.4L1460.6 936.4Z" fill="#a6a6a6"/>
<rect x="653.3" y="262" width="16.6" height="9.8" fill="#3c3c3c"/><path d="M656 265.9H663.2V263.4L667.4 267L663.2 270.6V268.1H656Z" fill="#f4f4f4"/>
<path d="M103 166V198.5H108.6" fill="none" stroke="#aeaeae" stroke-width="1.2"/>
<path d="M103 253.5V818.5H108.6" fill="none" stroke="#aeaeae" stroke-width="1.2"/>
<path d="M103 874.5V1011" fill="none" stroke="#aeaeae" stroke-width="1.2"/>
<rect x="97.5" y="243.0" width="10.6" height="10.6" fill="#fff" stroke="#aeaeae" stroke-width="1.2"/><path d="M100 248.3H105.6" stroke="#555" stroke-width="1.3"/>
<rect x="97.5" y="863.0" width="10.6" height="10.6" fill="#fff" stroke="#aeaeae" stroke-width="1.2"/><path d="M100 868.3H105.6" stroke="#555" stroke-width="1.3"/>
<rect x="649.8" y="1014" width="4.6" height="4.4" fill="#3c3c3c"/><rect x="657.6" y="1014" width="4.7" height="4.4" fill="#3c3c3c"/><rect x="649.8" y="1021.5" width="12.5" height="4.6" fill="#3c3c3c"/>
<path d="M746.4 1014.6H752L753.4 1012.6H763V1026H746.4Z" fill="#dcb67a"/><path d="M754 1014.4H762.4" stroke="#efd7ae" stroke-width="0.8"/>
<path d="M878.2 1012.4H895.7M878.2 1017.6H890.4M878.2 1022.6H893M878.2 1027.2H886.7" stroke="#3c3c3c" stroke-width="2.2"/>
<circle cx="964.2" cy="1016.8" r="4.4" fill="none" stroke="#3c3c3c" stroke-width="2.6"/><path d="M960.6 1020.4L955.2 1025.4" stroke="#3c3c3c" stroke-width="3" stroke-linecap="round"/>
<rect x="1083" y="1013.9" width="6.4" height="2.8" fill="#3c3c3c"/><rect x="1090.7" y="1013.9" width="3.5" height="6" fill="#3c3c3c"/><circle cx="1086.7" cy="1021.2" r="2.3" fill="none" stroke="#2a6ac0" stroke-width="1.4"/><path d="M1084.8 1023L1081.2 1026.4" stroke="#2a6ac0" stroke-width="1.8" stroke-linecap="round"/>
<path d="M1286.2 1015.2Q1286 1013.9 1284.6 1013.9H1278V1023.3H1283.4Q1285.6 1023.3 1286.2 1024.8Q1286.8 1023.3 1289 1023.3H1294.4V1013.9H1287.8Q1286.4 1013.9 1286.2 1015.2V1024.6" fill="none" stroke="#3c3c3c" stroke-width="1.3" stroke-linejoin="round"/>
<defs><pattern id="dots" x="687.5" y="122.5" width="5" height="5" patternUnits="userSpaceOnUse"><rect x="0.5" y="0.5" width="1.1" height="1.1" fill="#a4a4a4"/><rect x="3" y="3" width="1.1" height="1.1" fill="#a4a4a4"/></pattern></defs><rect x="687.5" y="122.5" width="742.5" height="7.5" fill="url(#dots)"/>
</svg>
</body></html>
